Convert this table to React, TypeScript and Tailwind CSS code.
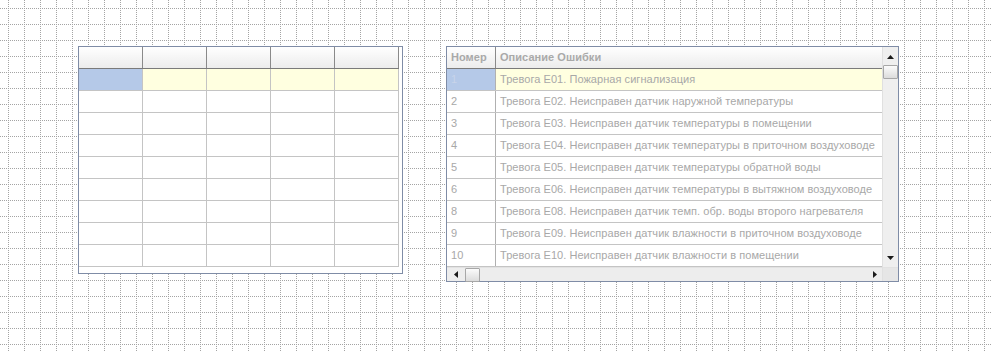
import React from "react";

const errors = [
  { n: "1", text: "Тревога E01. Пожарная сигнализация" },
  { n: "2", text: "Тревога E02. Неисправен датчик наружной температуры" },
  { n: "3", text: "Тревога E03. Неисправен датчик температуры в помещении" },
  { n: "4", text: "Тревога E04. Неисправен датчик температуры в приточном воздуховоде" },
  { n: "5", text: "Тревога E05. Неисправен датчик температуры обратной воды" },
  { n: "6", text: "Тревога E06. Неисправен датчик температуры в вытяжном воздуховоде" },
  { n: "8", text: "Тревога E08. Неисправен датчик темп. обр. воды второго нагревателя" },
  { n: "9", text: "Тревога E09. Неисправен датчик влажности в приточном воздуховоде" },
  { n: "10", text: "Тревога E10. Неисправен датчик влажности в помещении" },
];

const font = { fontFamily: '"Liberation Sans", Arial, sans-serif' };

// one 16px cell of the designer grid: a dot every 2px along x=8 and y=8
const steps = [0, 2, 4, 6, 8, 10, 12, 14];

const CanvasGrid = () => (
  <svg className="absolute inset-0" width="991" height="351" shapeRendering="crispEdges">
    <defs>
      <pattern id="designer-grid" x="0" y="0" width="16" height="16" patternUnits="userSpaceOnUse">
        {steps.map((s) => (
          <rect key={"v" + s} x={8} y={s} width={1} height={1} fill="#a4a4a4" />
        ))}
        {steps.map((s) => (
          <rect key={"h" + s} x={s} y={8} width={1} height={1} fill="#a4a4a4" />
        ))}
      </pattern>
    </defs>
    <rect width="991" height="351" fill="url(#designer-grid)" />
  </svg>
);

const Arrow = ({ dir }: { dir: "up" | "down" | "left" | "right" }) => {
  const pts = {
    up: "0,4 7,4 3.5,0",
    down: "0,0 7,0 3.5,4",
    left: "4,0 4,7 0,3.5",
    right: "0,0 0,7 4,3.5",
  }[dir];
  const vertical = dir === "up" || dir === "down";
  return (
    <svg width={vertical ? 7 : 4} height={vertical ? 4 : 7}>
      <polygon points={pts} fill="#1a1a1a" />
    </svg>
  );
};

const Thumb = ({ className }: { className: string }) => (
  <div
    className={`border border-[#a7a7a7] rounded-[1px] bg-gradient-to-b from-[#fbfbfb] to-[#dcdcdc] ${className}`}
  />
);

const EmptyGrid = () => {
  const cols = [0, 1, 2, 3, 4];
  const rows = [0, 1, 2, 3, 4, 5, 6, 7, 8];
  return (
    <div className="w-[325px] h-[228px] border border-[#7f8ca6] bg-white">
      <div className="flex h-[22px] border-b border-[#7a7a7a] w-[320px] bg-gradient-to-b from-white to-[#ececec]">
        {cols.map((c) => (
          <div key={c} className="w-16 h-full border-r border-[#8a8a8a]" />
        ))}
      </div>
      {rows.map((r) => (
        <div key={r} className="flex h-[22px] w-[320px] border-b border-[#c4c4c4]">
          {cols.map((c) => (
            <div
              key={c}
              className={`w-16 h-full border-r border-[#c4c4c4] ${
                r === 0 ? (c === 0 ? "bg-[#b5c9e8]" : "bg-[#ffffe0]") : ""
              }`}
            />
          ))}
        </div>
      ))}
    </div>
  );
};

const ErrorsGrid = () => (
  <div
    className="w-[453px] h-[236px] border border-[#7f8ca6] bg-white flex text-[11px] tracking-[0.05px]"
    style={font}
  >
    <div className="w-[435px] flex flex-col">
      <div className="flex h-[22px] border-b border-[#7a7a7a] bg-gradient-to-b from-white to-[#ececec] font-bold text-[#a9a9a9]">
        <div className="w-[49px] border-r border-[#8a8a8a] pl-[4px] flex items-center">Номер</div>
        <div className="flex-1 pl-[4px] flex items-center">Описание Ошибки</div>
      </div>
      {errors.map((e, i) => (
        <div key={e.n} className="flex h-[22px] border-b border-[#c4c4c4] text-[#a8a8a8]">
          <div
            className={`w-[49px] border-r border-[#b0b0b0] pl-[4px] flex items-center ${
              i === 0 ? "bg-[#b5c9e8] text-[#c8d4ea]" : ""
            }`}
          >
            {e.n}
          </div>
          <div
            className={`flex-1 pl-[4px] flex items-center whitespace-nowrap overflow-hidden ${
              i === 0 ? "bg-[#ffffe0]" : ""
            }`}
          >
            {e.text}
          </div>
        </div>
      ))}
      <div className="h-[14px] flex items-center bg-[#ededed] border-t border-[#e2e2e2]">
        <div className="w-[18px] flex justify-center">
          <Arrow dir="left" />
        </div>
        <Thumb className="w-[15px] h-[14px]" />
        <div className="flex-1" />
        <div className="w-[15px] flex justify-center">
          <Arrow dir="right" />
        </div>
      </div>
    </div>
    <div className="w-[16px] flex flex-col bg-[#efefef] border-l border-[#e0e0e0]">
      <div className="h-[18px] flex items-center justify-center pt-[2px]">
        <Arrow dir="up" />
      </div>
      <Thumb className="w-[15px] h-[14px]" />
      <div className="flex-1" />
      <div className="h-[18px] flex items-center justify-center">
        <Arrow dir="down" />
      </div>
      <div className="h-[14px] bg-[#e6e6e6] border-t border-[#e2e2e2]" />
    </div>
  </div>
);

export default function App() {
  return (
    <div className="relative w-[991px] h-[351px] bg-white overflow-hidden">
      <CanvasGrid />
      <div className="relative flex items-start gap-[43px] pl-[78px] pt-[46px]">
        <EmptyGrid />
        <ErrorsGrid />
      </div>
    </div>
  );
}
